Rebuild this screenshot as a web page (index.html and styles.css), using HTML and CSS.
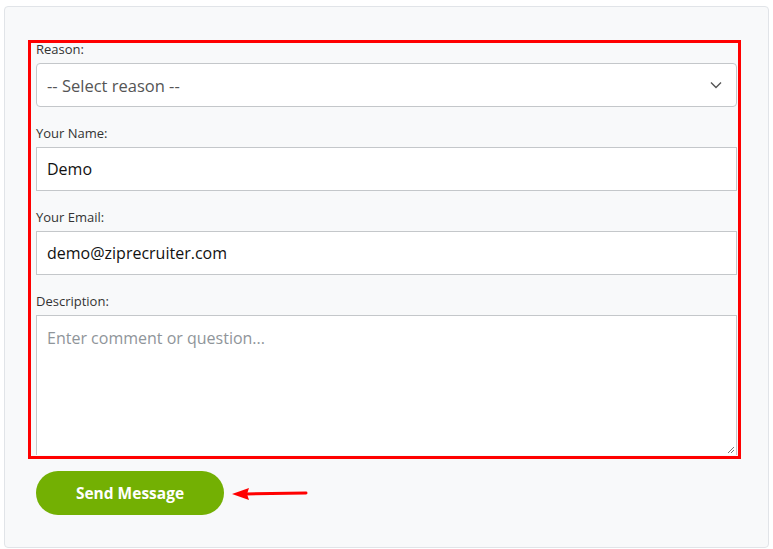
FILE: index.html
```html
<!DOCTYPE html>
<html>
<head>
<meta charset="utf-8">
<link rel="stylesheet" href="styles.css">
</head>
<body>
<div class="card">
  <form class="form">
    <div class="field">
      <label class="label">Reason:</label>
      <div class="select">
        <span>-- Select reason --</span>
        <svg class="chev" width="12" height="8" viewBox="0 0 12 8"><path d="M1 1.5 L6 6.5 L11 1.5" fill="none" stroke="#555" stroke-width="1.4"/></svg>
      </div>
    </div>
    <div class="field">
      <label class="label">Your Name:</label>
      <div class="input">Demo</div>
    </div>
    <div class="field">
      <label class="label">Your Email:</label>
      <div class="input">demo@ziprecruiter.com</div>
    </div>
    <div class="field">
      <label class="label">Description:</label>
      <div class="textarea">
        <span class="placeholder">Enter comment or question...</span>
        <svg class="grip" width="8" height="8" viewBox="0 0 8 8"><path d="M7 1 L1 7 M7 4 L4 7" stroke="#777" stroke-width="1"/></svg>
      </div>
    </div>
  </form>
  <div class="actions">
    <button class="btn" type="button">Send Message</button>
    <svg class="arrow" width="76" height="14" viewBox="0 0 76 14"><path d="M14 7 L74 6" stroke="#f00" stroke-width="3" stroke-linecap="round"/><path d="M0 7 L17 1 L15 7 L17 13 Z" fill="#f00"/></svg>
  </div>
</div>
</body>
</html>
```
FILE: styles.css
```css
html, body { margin: 0; padding: 0; background: #fff; }
body { font-family: "Open Sans", "Noto Sans", sans-serif; }
.card {
  margin: 6px 0 0 4px;
  border: 1px solid #e1e4e8;
  border-radius: 4px;
  background: #f8f9fa;
  padding: 33px 0 0 23px;
  box-sizing: content-box;
  width: 740px;
  height: 507px;
}
.form {
  border: 3px solid #ff0000;
  padding: 0 1px 1px 5px;
  box-sizing: border-box;
  width: 713px;
  display: flex;
  flex-direction: column;
  gap: 20px;
}
.field { display: flex; flex-direction: column; }
.label { font-size: 13px; line-height: 12px; margin-bottom: 8px; color: #333; }
.select, .input, .textarea {
  background: #fff;
  border: 1px solid #c4c7ca;
  box-sizing: border-box;
  font-size: 16px;
  padding: 0 10px;
}
.select {
  height: 44px;
  border-radius: 4px;
  display: flex;
  align-items: center;
  justify-content: space-between;
  color: #555;
  font-size: 16.5px;
}
.chev { margin-right: 4px; }
.input { height: 44px; display: flex; align-items: center; color: #111; }
.textarea {
  height: 140px;
  padding-top: 11px;
  position: relative;
  border-bottom: 0;
}
.placeholder { color: #8f959a; }
.grip { position: absolute; right: 1px; bottom: 1px; }
.actions {
  display: flex;
  align-items: center;
  gap: 8px;
  margin-top: 12px;
  padding-left: 8px;
}
.btn {
  width: 188px;
  height: 44px;
  border: 0;
  border-radius: 22px;
  background: #73b003;
  color: #fff;
  font-family: "Open Sans", sans-serif;
  font-weight: 700;
  font-size: 15.5px;
}
.arrow { margin-top: 2px; }
```
